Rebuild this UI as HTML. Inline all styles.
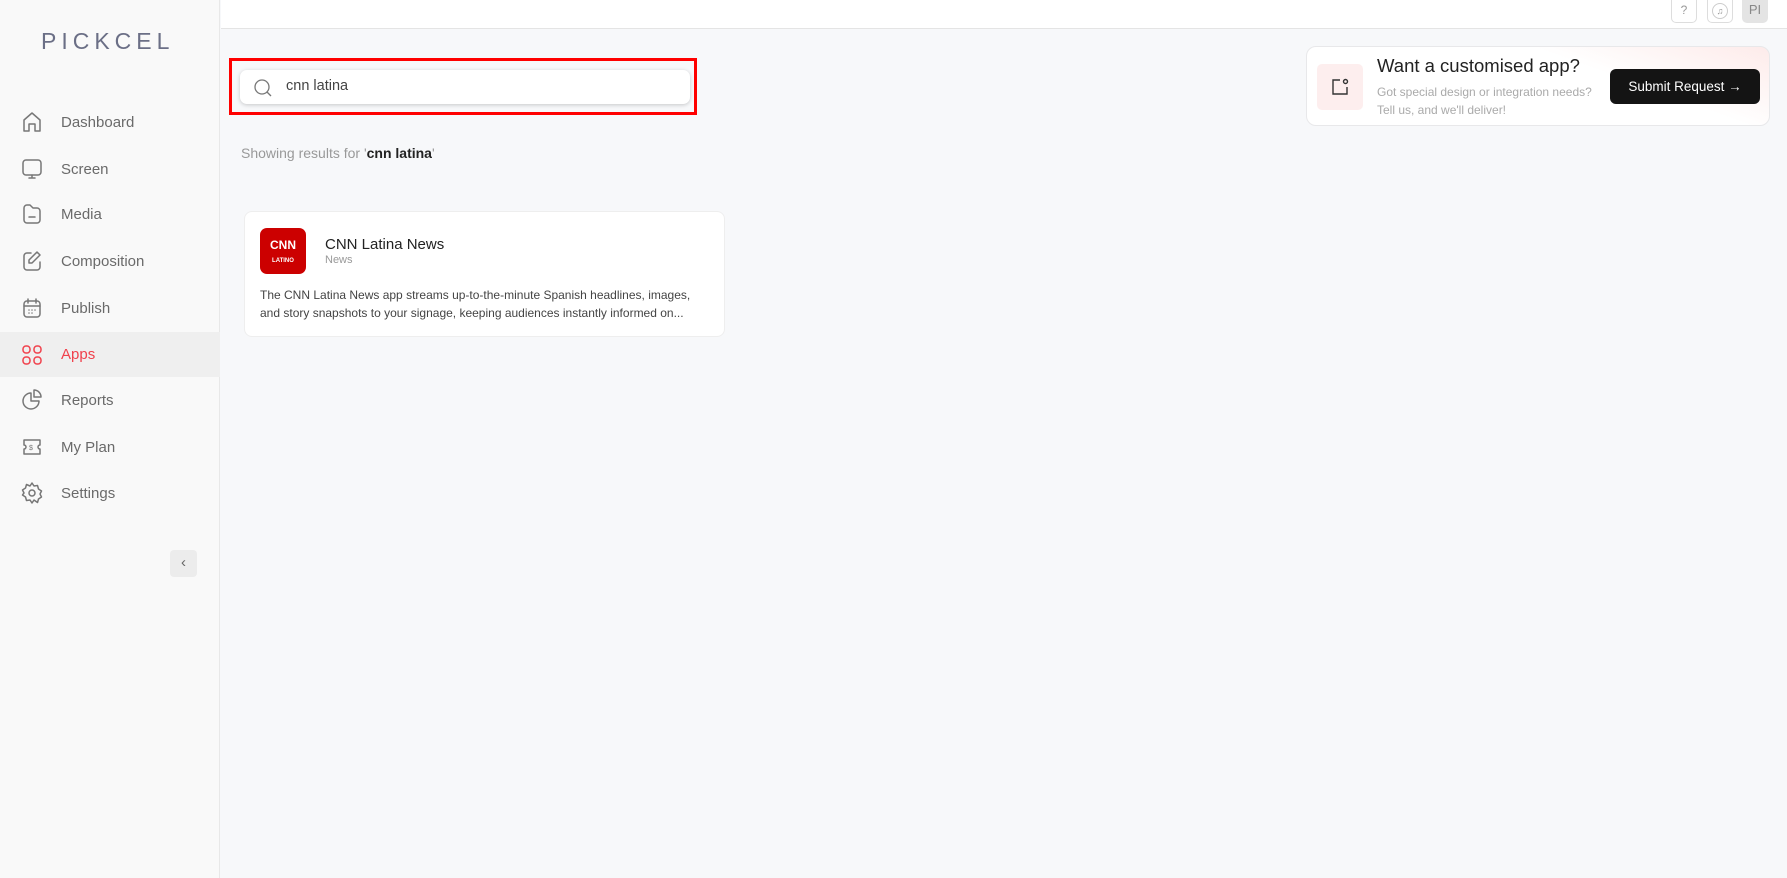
<!DOCTYPE html>
<html><head><meta charset="utf-8"><style>
*{box-sizing:border-box;margin:0;padding:0}
body{width:1787px;height:878px;overflow:hidden;background:#f7f8fa;font-family:"Liberation Sans",sans-serif;position:relative;color:#222}
.side{position:absolute;left:0;top:0;width:220px;height:878px;background:#f9f9f9;border-right:1px solid #e8e8e8}
.logo{position:absolute;left:41px;top:28px;font-size:23px;letter-spacing:5px;color:#6b6f86;font-weight:300}
.nav{position:absolute;left:0;width:220px;height:46px;display:flex;align-items:center;font-size:15px;color:#6a6a6a}
.nav svg{position:absolute;left:20px;width:24px;height:24px;fill:none;stroke:#777;stroke-width:1.5;stroke-linecap:round;stroke-linejoin:round}
.nav span{position:absolute;left:61px}
.nav.act{background:#efefef;color:#f0414c}
.nav.act svg{stroke:#f0414c}
.top{position:absolute;left:221px;top:0;right:0;height:29px;background:#fff;border-bottom:1px solid #e4e4e4}
.tb{position:absolute;top:0;width:26px;height:23px;border:1px solid #ddd;border-top:none;border-radius:0 0 5px 5px;background:#fff;font-size:12px;color:#999;text-align:center;line-height:20px}
</style></head><body>
<div class="side">
<div class="logo">PICKCEL</div>
<div class="nav" style="top:99px"><svg viewBox="0 0 24 24"><path d="M4 21V10l8-7 8 7v11h-5v-7H9v7z"/></svg><span>Dashboard</span></div>
<div class="nav" style="top:146px"><svg viewBox="0 0 24 24"><rect x="3" y="3" width="18" height="15" rx="3"/><path d="M12 18v3M9 21h6"/></svg><span>Screen</span></div>
<div class="nav" style="top:191px"><svg viewBox="0 0 24 24"><path d="M4 6a3 3 0 013-3h3l3 3h4a3 3 0 013 3v9a3 3 0 01-3 3H7a3 3 0 01-3-3z"/><path d="M9 15h6"/></svg><span>Media</span></div>
<div class="nav" style="top:238px"><svg viewBox="0 0 24 24"><path d="M11 4H7a3 3 0 00-3 3v11a3 3 0 003 3h10a3 3 0 003-3v-5"/><path d="M17 3l3 3-8 8H9v-3z"/></svg><span>Composition</span></div>
<div class="nav" style="top:285px"><svg viewBox="0 0 24 24"><rect x="4" y="5" width="16" height="16" rx="3"/><path d="M8 3v4M16 3v4M4 10h16M9 14h.01M12 14h.01M15 14h.01M9 17h.01M12 17h.01"/></svg><span>Publish</span></div>
<div class="nav act" style="top:332px;height:45px"><svg viewBox="0 0 24 24"><rect x="3" y="3" width="7" height="7" rx="3"/><rect x="14" y="3" width="7" height="7" rx="3"/><rect x="3" y="14" width="7" height="7" rx="3"/><rect x="14" y="14" width="7" height="7" rx="3"/></svg><span>Apps</span></div>
<div class="nav" style="top:377px"><svg viewBox="0 0 24 24"><path d="M11 5a8 8 0 108 8h-8z"/><path d="M14 2a7 7 0 017 7h-7z"/></svg><span>Reports</span></div>
<div class="nav" style="top:424px"><svg viewBox="0 0 24 24"><path d="M4 5h16v5a2 2 0 000 4v5H4v-5a2 2 0 000-4z"/><text x="9" y="15" font-size="7" fill="#777" stroke="none">$</text></svg><span>My Plan</span></div>
<div class="nav" style="top:470px"><svg viewBox="0 0 24 24"><circle cx="12" cy="12" r="3"/><path d="M12 2l2 3 3.5-.5 1 3.5 3 2-1.5 3 1.5 3-3 2-1 3.5L14 19l-2 3-2-3-3.5.5-1-3.5-3-2L4 12l-1.5-3 3-2 1-3.5L10 5z"/></svg><span>Settings</span></div>
<div style="position:absolute;left:170px;top:550px;width:27px;height:27px;background:#ececec;border-radius:4px;color:#666;text-align:center;line-height:26px;font-size:15px">‹</div>
</div>
<div class="top">
<div class="tb" style="left:1450px">?</div>
<div class="tb" style="left:1486px"><span style="display:inline-block;width:16px;height:16px;border:1px solid #ccc;border-radius:50%;margin-top:3px;font-size:9px;line-height:14px">♫</span></div>
<div class="tb" style="left:1521px;background:#e4e4e4;border-color:#e4e4e4;font-size:13px;color:#888">PI</div>
</div>
<div style="position:absolute;left:229px;top:58px;width:468px;height:57px;border:3px solid #f00"></div>
<div style="position:absolute;left:240px;top:70px;width:450px;height:34px;background:#fff;border-radius:7px;box-shadow:0 1px 4px rgba(0,0,0,.2)">
<svg style="position:absolute;left:13px;top:8px" width="20" height="20" viewBox="0 0 20 20" fill="none" stroke="#777" stroke-width="1.3"><circle cx="9" cy="9" r="7"/><path d="M14 14l4 4"/></svg>
<div style="position:absolute;left:46px;top:8px;font-size:14.5px;color:#444">cnn latina</div></div>
<div style="position:absolute;left:241px;top:145px;font-size:14px;color:#999">Showing results for '<b style="color:#222;font-weight:600">cnn latina</b>'</div>
<div style="position:absolute;left:244px;top:211px;width:481px;height:126px;background:#fff;border:1px solid #eee;border-radius:8px">
<div style="position:absolute;left:15px;top:16px;width:46px;height:46px;background:#cc0000;border-radius:7px;color:#fff;text-align:center;font-weight:bold;font-size:12px;line-height:13px;padding-top:11px">CNN<br><span style="font-size:6px">LATINO</span></div>
<div style="position:absolute;left:80px;top:24px;font-size:15px;color:#222">CNN Latina News</div>
<div style="position:absolute;left:80px;top:42px;font-size:11px;color:#999">News</div>
<div style="position:absolute;left:15px;top:74px;width:445px;font-size:12px;line-height:18px;color:#444">The CNN Latina News app streams up-to-the-minute Spanish headlines, images, and story snapshots to your signage, keeping audiences instantly informed on...</div>
</div>
<div style="position:absolute;left:1306px;top:46px;width:464px;height:80px;background:linear-gradient(200deg,#fdebea 0%,#fff 35%);border:1px solid #e8e8ea;border-radius:10px">
<div style="position:absolute;left:10px;top:17px;width:46px;height:46px;background:#fdeeee;border-radius:5px"><svg style="position:absolute;left:13px;top:13px" width="20" height="20" viewBox="0 0 20 20" fill="none" stroke="#333" stroke-width="1.4"><path d="M10 3H3v14h14v-7"/><circle cx="15.5" cy="4.5" r="2"/></svg></div>
<div style="position:absolute;left:70px;top:8px;font-size:18.5px;color:#222">Want a customised app?</div>
<div style="position:absolute;left:70px;top:36px;font-size:12px;line-height:18px;color:#aaa">Got special design or integration needs?<br>Tell us, and we'll deliver!</div>
<div style="position:absolute;left:303px;top:22px;width:150px;height:35px;background:#141414;border-radius:6px;color:#fff;font-size:13.5px;text-align:center;line-height:35px">Submit Request →</div>
</div>
</body></html>
